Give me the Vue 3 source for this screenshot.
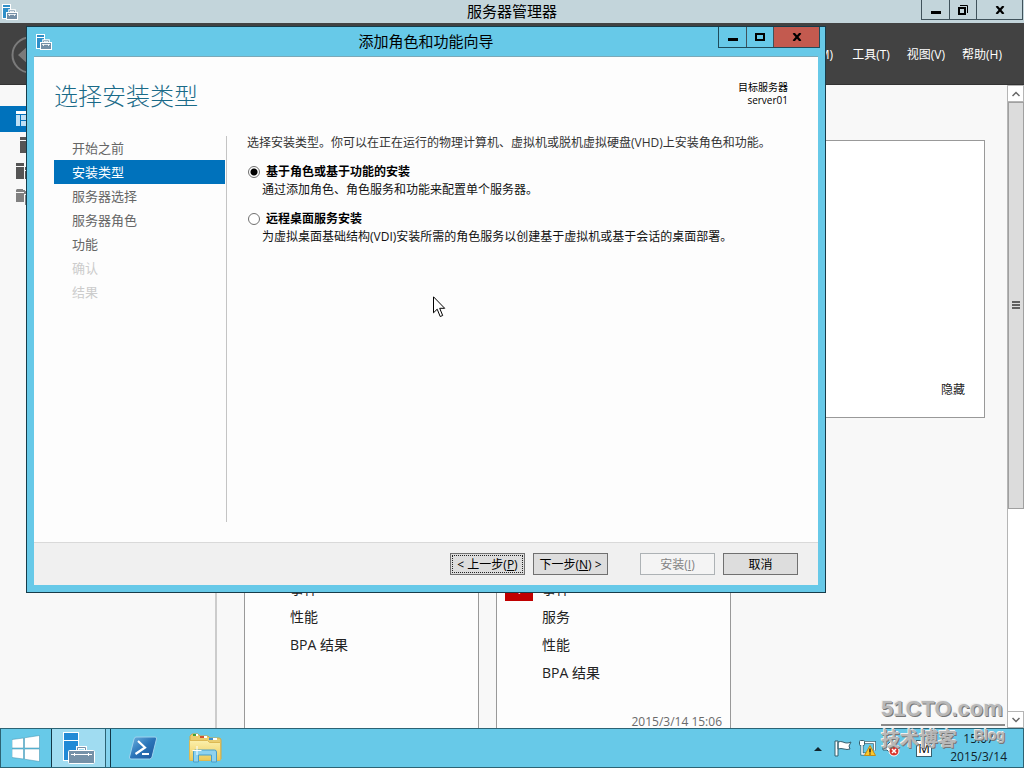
<script setup>
import { ref } from 'vue'

const menus = ['工具(T)', '视图(V)', '帮助(H)']
const steps = [
  { name: '开始之前', state: '' },
  { name: '安装类型', state: 'current' },
  { name: '服务器选择', state: '' },
  { name: '服务器角色', state: '' },
  { name: '功能', state: '' },
  { name: '确认', state: 'off' },
  { name: '结果', state: 'off' }
]
const options = [
  { id: 'role', name: '基于角色或基于功能的安装', text: '通过添加角色、角色服务和功能来配置单个服务器。' },
  { id: 'rds', name: '远程桌面服务安装', text: '为虚拟桌面基础结构(VDI)安装所需的角色服务以创建基于虚拟机或基于会话的桌面部署。' }
]
const installType = ref('role')
const tiles = [
  { rows: ['事件', '性能', 'BPA 结果'], badge: '', time: '' },
  { rows: ['事件', '服务', '性能', 'BPA 结果'], badge: '1', time: '2015/3/14 15:06' }
]
</script>

<template>
  <div class="desktop">
    <main class="manager">
      <header class="titlebar">
        <svg class="app-icon" width="16" height="16" viewBox="0 0 16 16">
          <rect x=".5" y=".5" width="8" height="14" fill="#2f8fc8" stroke="#fff" />
          <path d="M1 3.500h7" stroke="#fff" />
          <path d="M7.500 8.500V6.500h5v2" fill="none" stroke="#fff" stroke-width="2.500" />
          <path d="M7.500 8.500V6.700h5v1.800" fill="none" stroke="#748fa6" stroke-width=".8" />
          <rect x="4.500" y="8.500" width="11" height="7" fill="#748fa6" stroke="#fff" />
          <path d="M6 10.500h8M7.500 10v2M12.500 10v2" stroke="#fff" stroke-width=".8" />
        </svg>
        <h1>服务器管理器</h1>
        <div class="winbtns">
          <button aria-label="最小化"><svg width="12" height="10" viewBox="0 0 12 10"><path d="M1 7.500h10" stroke="#000" stroke-width="3" /></svg></button>
          <button aria-label="还原"><svg width="12" height="12" viewBox="0 0 12 12"><path d="M3 1.500h7.500V9" fill="none" stroke="#000" /><rect x="2" y="4" width="6" height="6" fill="none" stroke="#000" stroke-width="2" /></svg></button>
          <button class="wide" aria-label="关闭"><svg width="10" height="8" viewBox="0 0 10 8"><path d="M1.500 0l7 8M8.500 0l-7 8" stroke="#000" stroke-width="2.200" /></svg></button>
        </div>
      </header>

      <nav class="navbar">
        <button class="back" aria-label="后退">
          <svg width="38" height="38" viewBox="0 0 38 38"><circle cx="19" cy="19" r="17.500" fill="none" stroke="#7b7b7b" stroke-width="2" /><path d="M7 19l11-10v6h12v8H18v6z" fill="#7b7b7b" /></svg>
        </button>
        <div class="menus">
          <button class="first">管理(M)</button>
          <button v-for="m in menus" :key="m">{{ m }}</button>
        </div>
      </nav>

      <div class="body">
        <aside class="side">
          <button class="on" aria-label="仪表板"><svg width="16" height="16" viewBox="0 0 16 16"><path d="M0 0h16v3H0z" fill="#fff" /><path d="M0 4h4v11H0zM5 4h11v5H5zM5 10h11v5H5z" fill="#bfe0f5" /></svg></button>
          <button aria-label="本地服务器"><svg width="16" height="16" viewBox="0 0 16 16"><path d="M4 0h9v3H4zM4 4h9v12H4z" fill="#555" /></svg></button>
          <button aria-label="所有服务器"><svg width="16" height="16" viewBox="0 0 16 16"><path d="M0 0h8v3H0zM0 4h8v12H0zM9 4h7v3H9zM9 8h7v8H9z" fill="#555" /></svg></button>
          <button aria-label="文件和存储服务"><svg width="16" height="16" viewBox="0 0 16 16"><path d="M1 0h6v1h2v2H0V1zM0 4h8v9H0zM8 2h8v3H8zM9 6h7v10H9z" fill="#808080" /></svg></button>
        </aside>

        <section class="content">
          <div class="welcome"><a href="#">隐藏</a></div>
          <div class="tiles">
            <article v-for="(t, i) in tiles" :key="i" class="tile">
              <ul>
                <li v-for="(r, j) in t.rows" :key="r">
                  <span class="mark"><b v-if="t.badge && j === 0">{{ t.badge }}</b></span>{{ r }}
                </li>
              </ul>
              <time v-if="t.time">{{ t.time }}</time>
            </article>
          </div>
        </section>

        <div class="scroll">
          <button aria-label="向上滚动"><svg width="8" height="6" viewBox="0 0 8 6"><path d="M.5 5L4 1.500 7.500 5" fill="none" stroke="#666" stroke-width="1.500" /></svg></button>
          <div class="thumb"><svg width="8" height="8" viewBox="0 0 8 8"><path d="M0 1h8M0 4h8M0 7h8" stroke="#606060" stroke-width="2" /></svg></div>
          <div class="track"></div>
          <button class="down" aria-label="向下滚动"><svg width="8" height="6" viewBox="0 0 8 6"><path d="M.5 1L4 4.500 7.500 1" fill="none" stroke="#666" stroke-width="1.500" /></svg></button>
        </div>
      </div>
    </main>

    <footer class="taskbar">
      <button class="start" aria-label="开始"><svg width="28" height="27" viewBox="0 0 28 27"><path d="M0 4.500L11.500 3v10H0zM12.500 2.800L27.500 .5V13h-15zM0 14h11.500v10L0 22.500zM12.500 14h15v12.500l-15-2.300z" fill="#fff" stroke="#3d8fac" stroke-width=".5" /></svg></button>
      <button class="running" aria-label="服务器管理器">
        <span class="face"><svg width="32" height="32" viewBox="0 0 32 32">
          <rect x=".5" y=".5" width="15" height="28" fill="#218ad6" stroke="#fff" />
          <path d="M1 8.500h14" stroke="#fff" />
          <path d="M14.500 18v-2.500h8V18" fill="none" stroke="#fff" stroke-width="3" /><path d="M14.500 18v-2.500h8V18" fill="none" stroke="#748fa6" />
          <rect x="5.500" y="18.500" width="26" height="13" rx="1" fill="#7591a8" stroke="#fff" />
          <path d="M8 22.500h21M11.500 21v3M25.500 21v3" stroke="#fff" />
        </svg></span>
        <span class="stack"></span>
      </button>
      <button class="task" aria-label="PowerShell"><svg width="30" height="24" viewBox="0 0 30 24">
        <defs><linearGradient id="ps" x1="0" y1="0" x2="1" y2="1"><stop offset="0" stop-color="#6fb4e2" /><stop offset=".5" stop-color="#2a74b8" /><stop offset="1" stop-color="#1d559a" /></linearGradient></defs>
        <path d="M8 1h19q2 0 1.500 2l-4.500 18q-.5 2-2.500 2H3q-2 0-1.500-2L6 3q.5-2 2-2z" fill="url(#ps)" stroke="#9fd3ee" />
        <path d="M10 5l7 6.500L7.500 18" fill="none" stroke="#fff" stroke-width="2.200" /><path d="M14 18h7" stroke="#fff" stroke-width="2" />
      </svg></button>
      <button class="task" aria-label="文件资源管理器"><svg width="34" height="30" viewBox="0 0 34 30">
        <defs><linearGradient id="fd" x1="0" y1="0" x2="0" y2="1"><stop offset="0" stop-color="#fbf0ac" /><stop offset="1" stop-color="#edca58" /></linearGradient></defs>
        <path d="M2 3l2-2h6l2 2h8l2 2h9q2 0 2 2v19H2z" fill="#e9cd70" stroke="#cda94b" />
        <path d="M5 2h5M13 4h6M21 6h8" stroke="#fff" stroke-width="2" />
        <path d="M5 2h3" stroke="#3ba33b" stroke-width="2" /><path d="M12 4h4" stroke="#d2522e" stroke-width="2" /><path d="M21 6h4" stroke="#3b8fd2" stroke-width="2" />
        <path d="M1.500 7.500h18l2 2h11v17q0 1-1 1h-29q-1 0-1-1z" fill="url(#fd)" stroke="#dcb954" />
        <path d="M5.500 29V19q0-2 2-2h19q2 0 2 2v10h-5v-7h-13v7z" fill="#8ed2ee" stroke="#4a9fc8" />
        <path d="M9 13v9M4.500 17.500h9" stroke="#fff" />
      </svg></button>
      <div class="tray">
        <svg width="8" height="5" viewBox="0 0 8 5"><path d="M0 5l4-4 4 4z" fill="#10242c" /></svg>
        <svg width="18" height="18" viewBox="0 0 18 18"><path d="M1 2h3v15H1zM4 3q3-1 5 0t4 1q2 0 4-1l-2 4 1 3q-3 1-6 0t-6 0z" fill="#fff" stroke="#35606f" /></svg>
        <svg width="18" height="18" viewBox="0 0 18 18"><path d="M6 3.500h10.500v8" fill="none" stroke="#35606f" stroke-width="3" /><path d="M6 3.500h10.500v8" fill="none" stroke="#fff" stroke-width="1.500" /><rect x="1.500" y="1.500" width="5" height="5" rx="1" fill="#fff" stroke="#35606f" /><path d="M4 6v9h4" fill="none" stroke="#35606f" stroke-width="3" /><path d="M4 6v9h4" fill="none" stroke="#fff" stroke-width="1.500" /><path d="M12 6.500l5.500 10h-11z" fill="#ffc928" stroke="#c58a10" /><path d="M12 9.500v4M12 14.500v1" stroke="#222" stroke-width="1.500" /></svg>
        <svg width="18" height="18" viewBox="0 0 18 18"><path d="M1 6h4l5-5v15l-5-5H1z" fill="#fff" stroke="#35606f" /><circle cx="12" cy="12" r="5" fill="#d8342c" stroke="#fff" /><path d="M10 10l4 4M14 10l-4 4" stroke="#fff" stroke-width="1.500" /></svg>
        <span class="ime">M</span>
        <time class="clock"><span>15:07</span><span>2015/3/14</span></time>
      </div>
    </footer>

    <div class="wizard" role="dialog" aria-labelledby="wizard-title">
      <header class="wizard-bar">
        <svg class="app-icon" width="16" height="16" viewBox="0 0 16 16">
          <rect x=".5" y=".5" width="8" height="14" fill="#2f8fc8" stroke="#fff" />
          <path d="M1 3.500h7" stroke="#fff" />
          <path d="M7.500 8.500V6.500h5v2" fill="none" stroke="#fff" stroke-width="2.500" />
          <path d="M7.500 8.500V6.700h5v1.800" fill="none" stroke="#748fa6" stroke-width=".8" />
          <rect x="4.500" y="8.500" width="11" height="7" fill="#748fa6" stroke="#fff" />
          <path d="M6 10.500h8M7.500 10v2M12.500 10v2" stroke="#fff" stroke-width=".8" />
        </svg>
        <h2 id="wizard-title">添加角色和功能向导</h2>
        <div class="winbtns">
          <button aria-label="最小化"><svg width="12" height="10" viewBox="0 0 12 10"><path d="M1 7.500h10" stroke="#000" stroke-width="3" /></svg></button>
          <button aria-label="最大化"><svg width="12" height="10" viewBox="0 0 12 10"><rect x="2" y="2" width="8" height="6" fill="none" stroke="#000" stroke-width="2" /></svg></button>
          <button class="wide close" aria-label="关闭"><svg width="10" height="8" viewBox="0 0 10 8"><path d="M1.500 0l7 8M8.500 0l-7 8" stroke="#000" stroke-width="2.200" /></svg></button>
        </div>
      </header>
      <div class="page">
        <div class="head">
          <h3>选择安装类型</h3>
          <p><span>目标服务器</span><span>server01</span></p>
        </div>
        <div class="columns">
          <ol class="steps">
            <li v-for="s in steps" :key="s.name" :class="s.state">{{ s.name }}</li>
          </ol>
          <div class="form">
            <p class="intro">选择安装类型。你可以在正在运行的物理计算机、虚拟机或脱机虚拟硬盘(VHD)上安装角色和功能。</p>
            <div v-for="o in options" :key="o.id" class="option">
              <label :for="o.id"><input :id="o.id" v-model="installType" type="radio" name="type" :value="o.id">{{ o.name }}</label>
              <p>{{ o.text }}</p>
            </div>
          </div>
        </div>
        <div class="actions">
          <button class="focus">&lt; 上一步(<u>P</u>)</button>
          <button>下一步(<u>N</u>) &gt;</button>
          <button class="install" disabled>安装(<u>I</u>)</button>
          <button>取消</button>
        </div>
      </div>
    </div>

    <svg class="cursor" width="13" height="22" viewBox="0 0 13 22"><path d="M.5 .8v16l3.700-3.600 3 7.300 2.500-1-3-7.200h5z" fill="#fff" stroke="#000" /></svg>

    <div class="watermark">
      <strong>51CTO.com</strong>
      <div><b>技术博客</b><em>Blog</em></div>
    </div>
  </div>
</template>

<style>
body { margin: 0; overflow: hidden; }
</style>

<style scoped>
* { box-sizing: border-box; margin: 0; padding: 0; }
.desktop {
  position: relative;
  display: flex;
  flex-direction: column;
  height: 100vh;
  overflow: hidden;
  font: 12px/16px "Open Sans", "Noto Sans CJK SC", sans-serif;
  color: #222;
}
button { font: inherit; color: inherit; border: 0; background: none; }
svg { display: block; flex: none; }
ul, ol { list-style: none; }
a { color: inherit; text-decoration: none; }

.manager { flex: 1; min-height: 0; display: flex; flex-direction: column; background: #f8f8f8; }
.titlebar { display: grid; grid-template-columns: 1fr auto 1fr; align-items: center; height: 23px; flex: none; background: #c3d5db; }
.titlebar .app-icon { margin-left: 2px; }
.titlebar h1, .wizard-bar h2 { font-size: 15px; font-weight: 400; line-height: 20px; color: #000; }
.titlebar h1, .wizard-bar h2 { padding-bottom: 2px; }
.winbtns { display: flex; justify-self: end; align-self: start; border: 1px solid #40525b; border-top: 0; }
.winbtns button { display: flex; align-items: center; justify-content: center; width: 27px; height: 19px; }
.winbtns button + button { border-left: 1px solid #40525b; }
.winbtns .wide { width: 46px; }
.titlebar .winbtns { margin-right: 1px; }

.navbar { display: flex; align-items: center; justify-content: space-between; height: 62px; flex: none; padding: 2px 22px 0 11px; background: #424242; border-bottom: 1px solid #333; }
.menus { display: flex; gap: 17px; color: #fff; }
.menus .first { margin-right: 2px; }

.body { flex: 1; min-height: 0; display: flex; }
.side { width: 217px; flex: none; padding-top: 21px; border-right: 2px solid #ccc; }
.side button { display: flex; align-items: center; width: 100%; height: 26px; padding-left: 16px; }
.side .on { background: #0072bc; }

.content { flex: 1; min-width: 0; display: flex; flex-direction: column; gap: 16px; padding: 55px 22px 0 27px; }
.welcome { display: flex; align-items: flex-end; justify-content: flex-end; height: 278px; flex: none; padding: 19px; border: 1px solid #999; background: #fff; }
.tiles { flex: 1; min-height: 0; display: flex; gap: 17px; }
.tile { display: flex; flex-direction: column; justify-content: space-between; width: 235px; padding: 140px 8px 0 8px; border: 1px solid #999; border-bottom: 0; background: #fdfdfd; font-size: 14px; }
.tile li { display: flex; height: 28px; line-height: 28px; align-items: center; }
.mark { width: 37px; flex: none; }
.mark b { display: block; width: 28px; line-height: 24px; background: #c00000; color: #fff; text-align: center; font-weight: 400; }
.tile time { align-self: flex-end; font-size: 12px; line-height: 12px; color: #6a6a6a; }

.scroll { width: 17px; flex: none; display: flex; flex-direction: column; border-left: 1px solid #b5b5b5; background: #fff; }
.scroll button { display: flex; align-items: center; justify-content: center; height: 17px; flex: none; border: 1px solid #b5b5b5; border-left: 0; }
.thumb { flex: 2; display: flex; align-items: center; justify-content: center; border: 1px solid #a0a0a0; background: #dcdcdc; }
.track { flex: 1; }

.taskbar { display: flex; height: 40px; flex: none; border: 1px solid #2c6374; background: #67c9e8; }
.taskbar button { display: flex; align-items: center; justify-content: center; }
.start { width: 50px; }
.running { width: 60px; border: solid #123848; border-width: 0 1px; }
.face { display: flex; align-items: center; justify-content: center; align-self: stretch; flex: 1; background: #a0dcf1; border-right: 1px solid #2c6374; }
.stack { width: 4px; align-self: stretch; background: #84d2ed; }
.task { width: 62px; }
.task:nth-child(3) { margin-left: 1px; }
.tray { display: flex; align-items: center; gap: 6px; margin-left: auto; padding-right: 16px; }
.tray svg:first-child { margin-right: 6px; }
.ime { width: 16px; margin-left: 10px; line-height: 15px; text-align: center; background: #fff; border: 1px solid #35606f; color: #000; font-size: 13px; }
.clock { display: flex; flex-direction: column; align-items: center; margin-left: 12px; line-height: 18px; color: #10242c; }

.wizard {
  position: absolute;
  inset: 26px 198px 175px 26px;
  display: flex;
  flex-direction: column;
  padding: 0 7px 7px;
  border: 1px solid #173c4a;
  background: #67c9e8;
}
.wizard-bar { display: grid; grid-template-columns: 1fr auto 1fr; align-items: center; height: 29px; flex: none; }
.wizard-bar .app-icon { margin-left: 2px; }
.wizard-bar .winbtns { margin-right: -2px; border-color: #1e4c5c; }
.wizard-bar .winbtns button { height: 20px; }
.close { background: #c35a4f; }
.page { flex: 1; min-height: 0; display: flex; flex-direction: column; background: #fdfdfd; border-top: 1px solid #7ba9b8; }
.head { display: flex; justify-content: space-between; padding: 23px 30px 0 20px; height: 79px; flex: none; }
.head h3 { font-size: 24px; line-height: 32px; font-weight: 300; color: #1a6a88; }
.head p { display: flex; flex-direction: column; align-items: flex-end; padding-top: 1px; font-size: 10px; line-height: 13px; color: #000; }
.columns { flex: 1; min-height: 0; display: flex; padding: 0 20px 20px; }
.steps { width: 173px; flex: none; padding-right: 1px; border-right: 1px solid #c4c4c4; font-size: 13px; line-height: 24px; color: #666; }
.steps li { padding-left: 18px; }
.steps .current { background: #0072bc; color: #fff; }
.steps .off { color: #ccc; }
.form { flex: 1; min-width: 0; padding-left: 20px; color: #111; }
.intro { line-height: 14px; margin-bottom: 13px; color: #333; white-space: nowrap; }
.option { margin-bottom: 11px; }
.option label { display: flex; align-items: center; gap: 6px; line-height: 18px; font-weight: 700; color: #000; }
.option p { padding-left: 15px; line-height: 18px; white-space: nowrap; }
.option input { appearance: none; width: 12px; height: 12px; margin-left: 1px; border: 1px solid #707070; border-radius: 50%; background: #fff; }
.option input:checked { background: radial-gradient(circle, #000 0 3px, #fff 4px); }
.actions { display: flex; align-items: center; justify-content: flex-end; gap: 8px; height: 43px; flex: none; padding-right: 20px; border-top: 1px solid #d9d9d9; background: #f0f0f0; }
.actions button { width: 75px; height: 22px; padding-top: 1px; line-height: 19px; border: 1px solid #707070; background: #ddd; color: #000; white-space: nowrap; }
.actions .focus { outline: 1px dotted #222; outline-offset: -3px; }
.actions .install { margin-left: 24px; border-color: #adb2b5; background: #f4f4f4; color: #838383; }

.cursor { position: absolute; left: 433px; top: 296px; }
.watermark { position: absolute; right: 19px; bottom: 16px; width: 124px; color: #b8b8b8; text-shadow: 1px 1px 0 #777, -1px -1px 0 #eee; }
.watermark strong { display: block; font: 700 22px/30px "Liberation Sans", sans-serif; white-space: nowrap; border-bottom: 2px solid #8a8a8a; }
.watermark div { display: flex; justify-content: space-between; align-items: flex-start; }
.watermark b { font-size: 19px; line-height: 26px; }
.watermark em { font: 700 14px/18px "Liberation Sans", sans-serif; }
</style>
